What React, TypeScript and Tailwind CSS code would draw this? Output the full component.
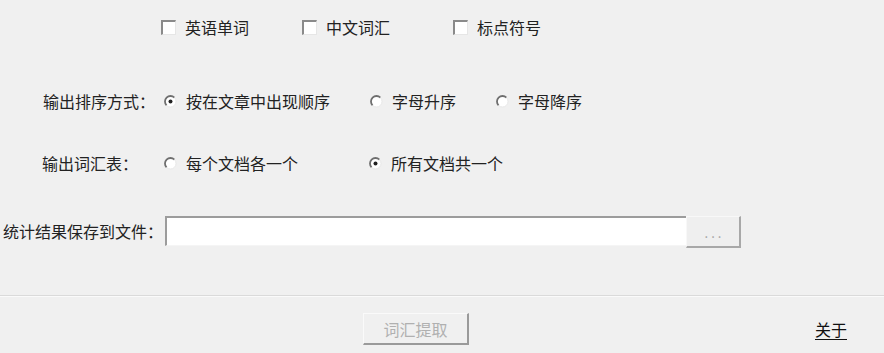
import React from "react";

const Checkbox: React.FC<{ label: string; width?: string }> = ({ label, width }) => (
  <div className={`flex items-center ${width ?? ""}`}>
    <span className="w-[15px] h-[15px] bg-white border-t-2 border-l-2 border-t-[#8a8a8a] border-l-[#8a8a8a] border-b border-r border-b-[#e6e6e6] border-r-[#e6e6e6] shrink-0" />
    <span className="ml-[9px]">{label}</span>
  </div>
);

const Radio: React.FC<{ label: string; checked?: boolean; width?: string }> = ({
  label,
  checked,
  width,
}) => (
  <div className={`flex items-center ${width ?? ""}`}>
    <svg width="13" height="13" viewBox="0 0 13 13" className="shrink-0">
      <circle cx="6.5" cy="6.5" r="5.5" fill="#ffffff" />
      <path d="M10.4 2.6 A5.5 5.5 0 0 0 2.6 10.4" fill="none" stroke="#6e6e6e" strokeWidth="1.8" />
      <path d="M2.6 10.4 A5.5 5.5 0 0 0 10.4 2.6" fill="none" stroke="#e8e8e8" strokeWidth="1" />
      {checked && <circle cx="6.5" cy="6.5" r="2" fill="#222" />}
    </svg>
    <span className="ml-[9px]">{label}</span>
  </div>
);

export default function App() {
  return (
    <div className="w-[884px] h-[353px] bg-[#f0f0f0] flex flex-col text-[16px] leading-[16px] text-[#222] font-['Noto_Sans_CJK_SC','Noto_Sans_CJK_JP',sans-serif] overflow-hidden">
      {/* 统计对象 */}
      <div className="mt-[19px] h-4 flex items-center pl-[161px]">
        <Checkbox label="英语单词" width="w-[141px]" />
        <Checkbox label="中文词汇" width="w-[151px]" />
        <Checkbox label="标点符号" />
      </div>

      {/* 排序方式 */}
      <div className="mt-[58px] h-4 flex items-center pl-[43px]">
        <span className="w-[121px]">输出排序方式：</span>
        <Radio label="按在文章中出现顺序" checked width="w-[206px]" />
        <Radio label="字母升序" width="w-[126px]" />
        <Radio label="字母降序" />
      </div>

      {/* 词汇表 */}
      <div className="mt-[46px] h-4 flex items-center pl-[42px]">
        <span className="w-[122px]">输出词汇表：</span>
        <Radio label="每个文档各一个" width="w-[205px]" />
        <Radio label="所有文档共一个" checked />
      </div>

      {/* 保存到文件 */}
      <div className="mt-[45px] h-8 flex items-start pl-[3px]">
        <span className="w-[162px] h-[30px] flex items-center">统计结果保存到文件：</span>
        <div className="w-[521px] h-[30px] bg-white border-t-2 border-l-2 border-t-[#9c9c9c] border-l-[#9c9c9c] border-b border-b-[#f5f5f5]" />
        <button className="w-[55px] h-[32px] bg-[#efefef] border-t border-l border-t-[#f8f8f8] border-l-[#f8f8f8] border-b-2 border-r-2 border-b-[#a8a8a8] border-r-[#a8a8a8] text-[#a0a0a0] text-[13px] tracking-[3px] flex items-center justify-center pt-[2px] pl-[3px]">
          ...
        </button>
      </div>

      {/* 分隔线 */}
      <div className="mt-[47px] border-t border-t-[#dadada] border-b border-b-[#fafafa]" />

      {/* 底部按钮 */}
      <div className="mt-[16px] flex items-center pl-[363px] pr-[37px]">
        <button className="w-[106px] h-[32px] bg-[#f0f0f0] border-t border-l border-t-[#fafafa] border-l-[#fafafa] border-b-2 border-r-2 border-b-[#9a9a9a] border-r-[#9a9a9a] text-[#b0b0b0] flex items-center justify-center">
          词汇提取
        </button>
        <span className="ml-auto text-[#111] underline underline-offset-[3px]">关于</span>
      </div>
    </div>
  );
}
